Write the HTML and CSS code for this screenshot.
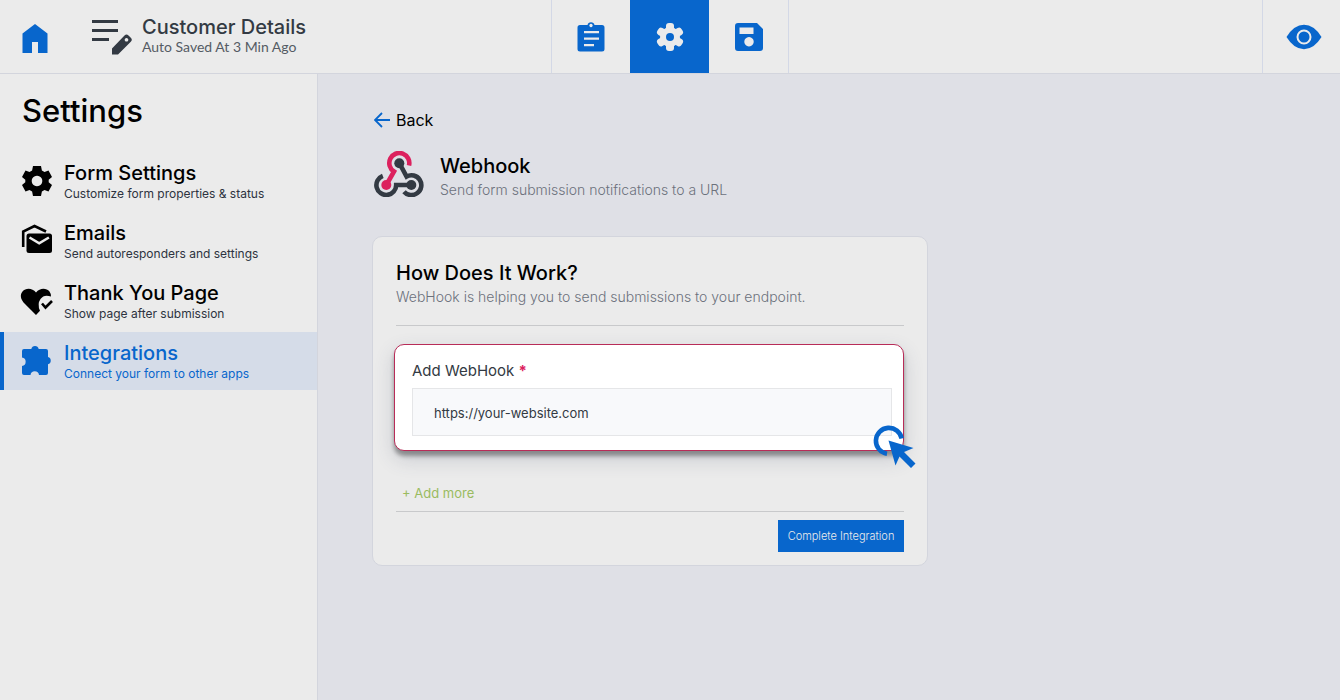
FILE: index.html
```html
<!DOCTYPE html>
<html lang="en">
<head>
    <meta charset="UTF-8">
    <meta name="viewport" content="width=device-width, initial-scale=1.0">
    <title>Customer Details - Webhook</title>
    <link rel="stylesheet" href="styles.css">
</head>
<body>
    <header class="topbar">
        <div class="topbar-left">
            <a href="#" class="home" aria-label="Home">
                <svg width="26" height="29" viewBox="0 0 26 29"><path fill="currentColor" d="M.5 9.500 13 0l12.500 9.500V29H16V18h-6v11H.5z"/></svg>
            </a>
            <svg class="form-icon" width="40" height="36" viewBox="0 0 40 36">
                <path fill="currentColor" d="M0 1h26v3H0zM0 10h26v3H0zM0 19h17v3H0z"/>
                <path fill="currentColor" fill-rule="evenodd" d="M20 29.500 32.500 16.500q2-2 4 0l2.300 2.300q2 2 0 4L26 35.500h-6zM34.500 19a1.800 1.800 0 1 0 .01 0z"/>
            </svg>
            <div class="form-info">
                <h1>Customer Details</h1>
                <p>Auto Saved At 3 Min Ago</p>
            </div>
        </div>
        <nav class="tabs">
            <button type="button" class="tab" aria-label="Form">
                <svg width="28" height="30" viewBox="0 0 28 30">
                    <path fill="currentColor" fill-rule="evenodd" d="M3 3h7.500a3.600 3.600 0 0 1 7 0H25q2.500 0 2.500 2.500v21.500q0 2.500-2.500 2.500H3Q.5 29.500.5 27V5.500Q.5 3 3 3zm11-1.200a1.700 1.700 0 1 0 .01 0zM7 9v2.200h15V9zm0 6.500v2.200h15v-2.200zM7 22v2.200h10V22z"/>
                </svg>
            </button>
            <button type="button" class="tab active" aria-label="Settings">
                <svg width="28" height="28" viewBox="0 0 28 28">
                    <g fill="currentColor">
                        <circle cx="14" cy="14" r="10"/>
                        <rect x="10" y="0" width="8" height="28" rx="3"/>
                        <rect x="10" y="0" width="8" height="28" rx="3" transform="rotate(60 14 14)"/>
                        <rect x="10" y="0" width="8" height="28" rx="3" transform="rotate(120 14 14)"/>
                    </g>
                    <circle cx="14" cy="14" r="4" fill="#0866cc"/>
                </svg>
            </button>
            <button type="button" class="tab" aria-label="Save">
                <svg width="28" height="28" viewBox="0 0 28 28">
                    <path fill="currentColor" fill-rule="evenodd" d="M3 0h19l6 6v19q0 3-3 3H3q-3 0-3-3V3q0-3 3-3zm1.500 4.500v6.500h14V4.500zM14 14a4.700 4.700 0 1 0 .01 0z"/>
                </svg>
            </button>
        </nav>
        <div class="topbar-right">
            <button type="button" class="tab preview" aria-label="Preview">
                <svg width="36" height="26" viewBox="0 0 36 26">
                    <path fill="currentColor" d="M.5 13Q8 .8 18 .8T35.500 13Q28 25.200 18 25.200T.5 13z"/>
                    <circle cx="18" cy="13" r="6.500" fill="none" stroke="#ebebeb" stroke-width="2"/>
                </svg>
            </button>
        </div>
    </header>

    <div class="layout">
        <aside class="sidebar">
            <h2>Settings</h2>
            <a href="#" class="menu-item">
                <svg width="30" height="30" viewBox="0 0 30 30">
                    <path fill="currentColor" fill-rule="evenodd" d="M11 0h8l.9 4.500 2.600 1.500 4-1.600 3.500 6.500-3.300 2.800v2.600l3.300 2.800-3.500 6.500-4-1.600-2.600 1.500L19 30h-8l-.9-4.500L7.500 24l-4 1.600L0 19.100l3.300-2.800v-2.600L0 10.900l3.500-6.500 4 1.600 2.600-1.500zM15 9.700a5.300 5.300 0 1 0 .01 0z"/>
                </svg>
                <span class="menu-text">
                    <strong>Form Settings</strong>
                    <small>Customize form properties &amp; status</small>
                </span>
            </a>
            <a href="#" class="menu-item">
                <svg width="30" height="30" viewBox="0 2 30 30">
                    <path d="M1.200 23V7.500L12.500 2 24 7.500" fill="none" stroke="currentColor" stroke-width="2.600"/>
                    <rect x="4.500" y="9.500" width="25.500" height="19.500" rx="2.500" fill="currentColor"/>
                    <path d="m7.500 13.500 9.700 5.800 9.700-5.800" fill="none" stroke="#ebebeb" stroke-width="2.600"/>
                </svg>
                <span class="menu-text">
                    <strong>Emails</strong>
                    <small>Send autoresponders and settings</small>
                </span>
            </a>
            <a href="#" class="menu-item">
                <svg width="32" height="30" viewBox="1 1 30 28">
                    <path fill="currentColor" d="M15 29 4 18C-1 13-1 8.500 1.500 5.500 4.500 2 11 1.500 15 6.500 19 1.500 25.500 2 28.500 5.500q1.500 2 1.500 5Q23 8 19.500 13t-.5 11.800z"/>
                    <path d="m21 17.500 3.500 4L31 15" fill="none" stroke="currentColor" stroke-width="2.600"/>
                </svg>
                <span class="menu-text">
                    <strong>Thank You Page</strong>
                    <small>Show page after submission</small>
                </span>
            </a>
            <a href="#" class="menu-item active">
                <svg width="30" height="30" viewBox="0 2 30 30">
                    <path fill="currentColor" d="M2 5h7.300a3.800 3.800 0 0 1 7.400 0H24q2 0 2 2v6a3.800 3.800 0 0 1 0 7.300V29q0 2-2 2h-7a4.300 4.300 0 0 0-8.500 0H2q-2 0-2-2v-7a4.300 4.300 0 0 0 0-8.500V7q0-2 2-2z"/>
                </svg>
                <span class="menu-text">
                    <strong>Integrations</strong>
                    <small>Connect your form to other apps</small>
                </span>
            </a>
        </aside>

        <main class="content">
            <a href="#" class="back">
                <svg width="16" height="16" viewBox="0 0 16 16"><path d="M8 1 1 8l7 7M1 8h15" fill="none" stroke="#0866cc" stroke-width="1.800"/></svg>
                Back
            </a>

            <div class="integration">
                <svg width="50" height="46" viewBox="0 0 50 46" fill="none" stroke-width="4.600">
                    <g stroke="#333a43">
                        <path d="M8.800 24.800A9.900 9.900 0 1 0 22.200 34H37"/>
                        <path d="M25.300 12 32.600 25.500A9.900 9.900 0 1 1 30 40.700"/>
                    </g>
                    <path d="M35 14.500A10 10 0 1 0 20 20.500L12.300 34" stroke="#dc215e"/>
                    <circle cx="25.300" cy="12.300" r="5" fill="#333a43"/>
                    <circle cx="37.300" cy="34" r="5" fill="#333a43"/>
                    <circle cx="12.300" cy="34" r="5" fill="#dc215e"/>
                </svg>
                <div class="integration-text">
                    <h2>Webhook</h2>
                    <p>Send form submission notifications to a URL</p>
                </div>
            </div>

            <form class="card">
                <div class="card-head">
                    <h3>How Does It Work?</h3>
                    <p>WebHook is helping you to send submissions to your endpoint.</p>
                </div>

                <div class="field">
                    <label for="webhook-url">Add WebHook <span class="required">*</span></label>
                    <input type="text" id="webhook-url" value="https://your-website.com">
                    <svg class="cursor" width="44" height="44" viewBox="0 0 44 44">
                        <path d="M28.700 13.500A13 13 0 1 0 14 28.700" fill="none" stroke="#0866cc" stroke-width="4.600"/>
                        <path fill="#0866cc" d="m15.500 15.500 25 7.500-9.500 4 11.500 11.500-4.500 4.500-11.500-11.500-4 9z"/>
                    </svg>
                </div>

                <button type="button" class="add-more">+ Add more</button>

                <div class="card-foot">
                    <button type="submit" class="submit">Complete Integration</button>
                </div>
            </form>
        </main>
    </div>
</body>
</html>
```
FILE: styles.css
```css
* {
    box-sizing: border-box;
}
body {
    margin: 0;
    min-height: 100vh;
    display: flex;
    flex-direction: column;
    font-family: Inter, "Liberation Sans", sans-serif;
    background-color: #dfe0e6;
    color: #000;
}
h1, h2, h3, p {
    margin: 0;
    font-weight: 500;
}
a {
    color: inherit;
    text-decoration: none;
}
button {
    font-family: inherit;
    border: none;
    cursor: pointer;
}
svg {
    display: block;
    flex-shrink: 0;
}

/* Top bar */
.topbar {
    display: grid;
    grid-template-columns: 1fr auto 1fr;
    height: 74px;
    background-color: #ebebeb;
    border-bottom: 1px solid #d3d5dd;
}
.topbar-left {
    display: flex;
    align-items: center;
    padding-left: 22px;
}
.home {
    color: #0866cc;
    padding-top: 4px;
}
.form-icon {
    margin-left: 44px;
    color: #333a43;
}
.form-info {
    margin-left: 10px;
    padding-bottom: 4px;
    color: #333a43;
}
.form-info h1 {
    font-size: 20px;
    line-height: 24px;
}
.form-info p {
    font-family: Lato, sans-serif;
    font-size: 14px;
    line-height: 16px;
    font-weight: 400;
    color: #555b64;
}
.tabs {
    display: flex;
    border-right: 1px solid #d3d8e6;
}
.tab {
    display: flex;
    align-items: center;
    justify-content: center;
    width: 79px;
    padding: 0;
    background: none;
    color: #0866cc;
}
.tab:first-child {
    border-left: 1px solid #d3d8e6;
}
.tab.active {
    background-color: #0866cc;
    color: #ebebeb;
}
.topbar-right {
    display: flex;
    justify-content: flex-end;
}
.tab.preview {
    width: 78px;
    padding-left: 4px;
}

/* Sidebar */
.layout {
    flex: 1;
    display: flex;
}
.sidebar {
    width: 318px;
    flex-shrink: 0;
    background-color: #ebebeb;
    border-right: 1px solid #d3d5dd;
}
.sidebar h2 {
    padding: 17px 22px 21px;
    font-size: 31px;
    line-height: 40px;
}
.menu-item {
    display: flex;
    align-items: center;
    height: 58px;
    margin-bottom: 2px;
    padding-left: 18px;
    border-left: 4px solid transparent;
}
.menu-item svg {
    width: 30px;
    overflow: visible;
}
.menu-item.active {
    background-color: #d5dce8;
    border-left-color: #0866cc;
    color: #0866cc;
}
.menu-text {
    display: flex;
    flex-direction: column;
    margin-left: 12px;
    padding-top: 2px;
}
.menu-text strong {
    font-size: 20px;
    line-height: 24px;
    font-weight: 500;
}
.menu-text small {
    font-size: 12px;
    line-height: 18px;
    color: #2d3340;
}
.menu-item.active small {
    color: inherit;
}

/* Content */
.content {
    flex: 1;
    padding: 34px 54px;
}
.back {
    display: inline-flex;
    align-items: center;
    gap: 6px;
    padding-left: 2px;
    font-size: 16px;
    line-height: 24px;
}
.integration {
    display: flex;
    align-items: center;
    gap: 16px;
    margin-top: 16px;
    padding-left: 2px;
}
.integration-text {
    padding-top: 4px;
}
.integration h2, .card-head h3 {
    font-size: 20px;
    line-height: 28px;
}
.integration p, .card-head p {
    font-size: 14px;
    line-height: 20px;
    font-weight: 300;
    color: #6c717c;
}
.card {
    max-width: 556px;
    margin-top: 36px;
    padding: 22px 23px 13px;
    background-color: #ebebeb;
    border: 1px solid #d3d5dd;
    border-radius: 10px;
}
.card-head {
    padding-bottom: 18px;
    border-bottom: 1px solid #c8c9cb;
}
.field {
    position: relative;
    margin: 18px 0 0 -2px;
    padding: 14px 11px 14px 17px;
    background-color: #fff;
    border: 1px solid #b82c58;
    border-radius: 10px;
    box-shadow: 0 5px 4px rgba(0, 0, 0, 0.35), 0 8px 20px rgba(60, 70, 100, 0.2);
}
.field label {
    display: block;
    margin-bottom: 5px;
    font-size: 15px;
    line-height: 24px;
    color: #333a43;
}
.required {
    color: #dc215e;
    font-weight: 700;
}
.field input {
    display: block;
    width: 100%;
    height: 48px;
    padding: 2px 21px 0;
    font-family: inherit;
    font-size: 13px;
    color: #333a43;
    background-color: #f8f9fb;
    border: 1px solid #e5e6e8;
}
.cursor {
    position: absolute;
    right: -14px;
    bottom: -19px;
}
.add-more {
    display: block;
    margin-top: 30px;
    padding: 0 6px;
    font-size: 13px;
    line-height: 24px;
    color: #9abb60;
    background: none;
}
.card-foot {
    display: flex;
    justify-content: flex-end;
    margin-top: 6px;
    padding-top: 8px;
    border-top: 1px solid #c8c9cb;
}
.submit {
    width: 126px;
    height: 32px;
    padding: 0;
    font-size: 11px;
    font-weight: 300;
    color: #ebebeb;
    background-color: #0866cc;
}
```
